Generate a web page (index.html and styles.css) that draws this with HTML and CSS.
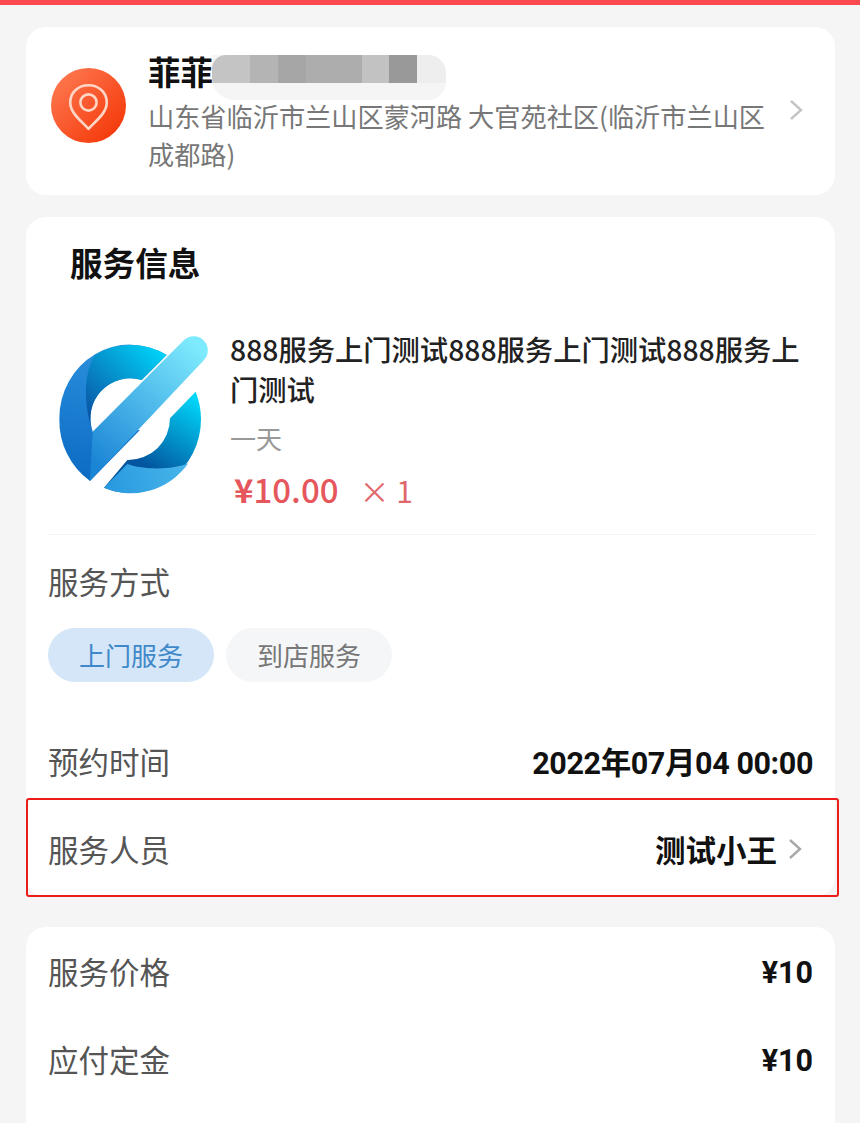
FILE: index.html
```html
<!DOCTYPE html>
<html lang="zh-CN">
<head>
    <meta charset="UTF-8">
    <meta name="viewport" content="width=device-width, initial-scale=1.0">
    <title>确认订单</title>
    <link rel="stylesheet" href="styles.css">
</head>
<body>
    <div class="topbar"></div>
    <div class="page">
        <!-- 地址 -->
        <div class="card address">
            <svg class="pin" viewBox="0 0 74 74">
                <defs>
                    <linearGradient id="pinBg" x1="0" y1="0" x2="1" y2="1">
                        <stop offset="0" stop-color="#ff7f58"/>
                        <stop offset="1" stop-color="#f33000"/>
                    </linearGradient>
                </defs>
                <circle cx="37" cy="37" r="37" fill="url(#pinBg)"/>
                <path d="M37 60 C31 53 19 45 19 34 C19 24 27 17 37 17 C47 17 55 24 55 34 C55 45 43 53 37 60 Z" fill="none" stroke="#ffd5c6" stroke-width="2.6" stroke-linejoin="round"/>
                <circle cx="37" cy="34" r="8" fill="none" stroke="#ffd5c6" stroke-width="2.6"/>
            </svg>
            <div class="addr-text">
                <div class="name-row">
                    <span class="name">菲菲</span>
                    <div class="mosaic">
                        <i class="m1"></i><i class="m2"></i><i class="m3"></i><i class="m4"></i><i class="m5"></i><i class="m6"></i><i class="m7"></i>
                    </div>
                </div>
                <div class="addr">山东省临沂市兰山区蒙河路 大官苑社区(临沂市兰山区成都路)</div>
            </div>
            <svg class="arrow arrow-addr" viewBox="0 0 14 22"><path d="M2 2 L12 11 L2 20" fill="none" stroke="#c4c4c4" stroke-width="2.4"/></svg>
        </div>

        <!-- 服务信息 -->
        <div class="card service">
            <div class="card-title">服务信息</div>
            <div class="goods">
                <svg class="logo" viewBox="54 45 450 480">
                    <defs>
                        <linearGradient id="lgA" gradientUnits="userSpaceOnUse" x1="110" y1="460" x2="200" y2="100">
                            <stop offset="0" stop-color="#0d6cc4"/>
                            <stop offset="1" stop-color="#2a8fdc"/>
                        </linearGradient>
                        <linearGradient id="lgB" gradientUnits="userSpaceOnUse" x1="350" y1="90" x2="150" y2="290">
                            <stop offset="0" stop-color="#00d0f6"/>
                            <stop offset="1" stop-color="#0a55a4"/>
                        </linearGradient>
                        <linearGradient id="lgC" gradientUnits="userSpaceOnUse" x1="460" y1="230" x2="320" y2="440">
                            <stop offset="0" stop-color="#00d6f8"/>
                            <stop offset="1" stop-color="#03559f"/>
                        </linearGradient>
                        <linearGradient id="lgD" gradientUnits="userSpaceOnUse" x1="210" y1="500" x2="440" y2="430">
                            <stop offset="0" stop-color="#2a9ae0"/>
                            <stop offset="1" stop-color="#48b6ea"/>
                        </linearGradient>
                        <linearGradient id="lgBar" gradientUnits="userSpaceOnUse" x1="170" y1="440" x2="480" y2="90">
                            <stop offset="0" stop-color="#1a84d5"/>
                            <stop offset="1" stop-color="#7eeafd"/>
                        </linearGradient>
                    </defs>
                    <path d="M380 105 A213 221 0 0 0 58 296 A213 221 0 0 0 150 483 L300 330 L158 335 A120 120 0 0 1 305 180 Z" fill="url(#lgA)"/>
                    <path d="M380 105 A213 221 0 0 0 270 75 A213 221 0 0 0 165 105 C130 160 130 250 158 335 A120 120 0 0 1 305 180 Z" fill="url(#lgB)"/>
                    <path d="M158 335 L432 60 A38 38 0 0 1 490 122 L150 483 Z" fill="url(#lgBar)"/>
                    <path d="M467 215 A213 221 0 0 1 483 296 A213 221 0 0 1 192 503 L262 420 A125 125 0 0 0 390 295 Z" fill="url(#lgC)"/>
                    <path d="M262 432 C310 450 400 450 445 430 A213 221 0 0 1 192 503 Z" fill="url(#lgD)"/>
                </svg>
                <div class="goods-info">
                    <div class="goods-name">888服务上门测试888服务上门测试888服务上门测试</div>
                    <div class="goods-spec">一天</div>
                    <div class="goods-price">
                        <span class="price"><b class="yen">¥</b>10.00</span>
                        <span class="qty">× 1</span>
                    </div>
                </div>
            </div>
            <div class="way">
                <div class="way-label">服务方式</div>
                <div class="pills">
                    <span class="pill pill-on">上门服务</span>
                    <span class="pill">到店服务</span>
                </div>
            </div>
            <div class="row row-time">
                <span class="row-label">预约时间</span>
                <span class="row-value">2022年07月04 00:00</span>
            </div>
            <div class="row row-picked">
                <span class="row-label">服务人员</span>
                <span class="row-value">测试小王
                    <svg class="arrow" viewBox="0 0 14 22"><path d="M2 2 L12 11 L2 20" fill="none" stroke="#a8a8a8" stroke-width="2.4"/></svg>
                </span>
            </div>
        </div>

        <!-- 价格 -->
        <div class="card prices">
            <div class="row">
                <span class="row-label">服务价格</span>
                <span class="row-value">¥10</span>
            </div>
            <div class="row">
                <span class="row-label">应付定金</span>
                <span class="row-value">¥10</span>
            </div>
        </div>
    </div>
</body>
</html>
```

FILE: styles.css
```css
*{
    margin: 0;
    padding: 0;
    box-sizing: border-box;
}
html,body{
    height: 1123px;
    overflow: hidden;
}
body{
    background-color: #f5f5f5;
    font-family: "Noto Sans CJK SC", "Noto Sans", sans-serif;
}
.topbar{
    height: 5px;
    background-color: #f9494f;
}
.page{
    padding: 22px 25px 0 26px;
}
.card{
    background-color: #fff;
    border-radius: 20px;
    margin-bottom: 22px;
}

/* 地址 */
.address{
    height: 168px;
    display: flex;
    align-items: center;
    padding: 0 32px 0 25px;
}
.pin{
    width: 75px;
    height: 75px;
    flex-shrink: 0;
    margin-right: 22px;
    margin-top: -11px;
}
.addr-text{
    width: 630px;
}
.name-row{
    position: relative;
    height: 48px;
}
.name{
    display: block;
    font-size: 32.5px;
    line-height: 44px;
    font-weight: 700;
    color: #111;
}
.mosaic{
    position: absolute;
    left: 64px;
    top: 6px;
    width: 234px;
    height: 45px;
    display: flex;
    align-items: flex-start;
    background-color: #f5f5f5;
    border-radius: 0 18px 18px 22px;
    overflow: hidden;
}
.mosaic i{
    display: block;
    height: 28px;
}
.m1{ width: 38px; background-color: #c4c4c4; border-radius: 14px 0 0 0; }
.m2{ width: 28px; background-color: #b4b4b4; }
.m3{ width: 28px; background-color: #a6a6a6; }
.m4{ width: 56px; background-color: #adadad; }
.m5{ width: 27px; background-color: #c2c2c2; }
.m6{ width: 28px; background-color: #999; }
.m7{ width: 29px; background-color: #eee; }
.addr{
    font-size: 26.2px;
    line-height: 38px;
    color: #777;
    width: 630px;
}
.arrow{
    width: 14px;
    height: 22px;
    display: inline-block;
}
.arrow-addr{
    flex-shrink: 0;
    margin: 0 0 0 11px;
    transform: translateY(-1px);
}

/* 服务信息 */
.service{
    height: 680px;
    margin-bottom: 30px;
    padding: 0 22px;
}
.card-title{
    font-size: 32.6px;
    font-weight: 700;
    line-height: 48px;
    color: #111;
    padding: 21px 0 0 22px;
    height: 71px;
}
.goods{
    display: flex;
    height: 247px;
    border-bottom: 1px solid #f3f3f3;
    margin-right: -3px;
    padding-top: 47px;
}
.logo{
    width: 150px;
    height: 160px;
    flex-shrink: 0;
    margin: 0 22px 0 10px;
    overflow: visible;
}
.goods-info{
    flex: 1;
    margin-top: -6px;
}
.goods-name{
    font-size: 28.3px;
    font-weight: 500;
    line-height: 40px;
    color: #222;
    width: 580px;
}
.goods-spec{
    font-size: 26px;
    line-height: 38px;
    margin-top: 10px;
    color: #999;
}
.goods-price{
    display: flex;
    align-items: baseline;
    margin-top: 11px;
    padding-left: 4px;
    color: #e5575c;
}
.price{
    font-size: 33px;
    line-height: 42px;
    font-weight: 500;
    margin-right: 21px;
}
.yen{
    font-weight: 700;
}
.qty{
    font-size: 30px;
    line-height: 42px;
    color: #e0686c;
}
.way{
    height: 191px;
    padding-top: 24px;
}
.way-label{
    font-size: 30.5px;
    line-height: 44px;
    color: #555;
}
.pills{
    display: flex;
    gap: 12px;
    margin-top: 25px;
}
.pill{
    width: 166px;
    height: 54px;
    border-radius: 27px;
    background-color: #f5f6f7;
    color: #777;
    font-size: 26px;
    line-height: 54px;
    text-align: center;
}
.pill-on{
    background-color: #d4e6f8;
    color: #3f88c9;
}
.row{
    height: 88px;
    display: flex;
    align-items: center;
    justify-content: space-between;
}
.row-label{
    font-size: 30.5px;
    color: #555;
}
.row-value{
    font-family: Roboto, "Noto Sans CJK SC", sans-serif;
    font-size: 30.5px;
    font-weight: 700;
    color: #111;
    display: flex;
    align-items: center;
    gap: 11px;
}
.row-time{
    height: 70px;
    margin-bottom: 2px;
}
.row-time .row-value{
    letter-spacing: -0.4px;
}
.row-picked{
    border: 2px solid #ec1c17;
    border-radius: 3px;
    margin: 0 -26px 0 -22px;
    padding: 3px 35px 0 20px;
    height: 99px;
}

/* 价格 */
.prices{
    padding: 0 22px;
    height: 196px;
    margin-bottom: 0;
    border-radius: 20px 20px 0 0;
}
.prices .row-value{
    margin-top: 3px;
}
```
